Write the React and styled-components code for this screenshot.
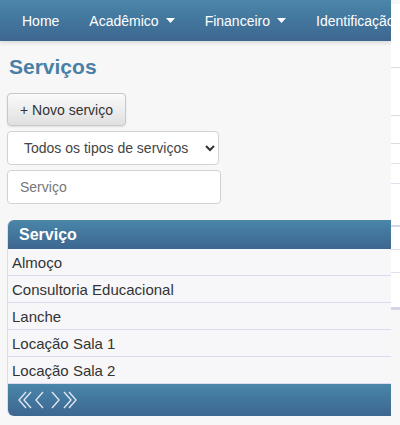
import React from 'react'
import styled, { createGlobalStyle } from 'styled-components'

const GlobalStyle = createGlobalStyle`
  html, body {
    margin: 0;
    padding: 0;
    background: #f7f7f7;
    font-family: "Liberation Sans", Arial, sans-serif;
    overflow: hidden;
  }
`;

const services = ['Almoço', 'Consultoria Educacional', 'Lanche', 'Locação Sala 1', 'Locação Sala 2'];

const sideLines = [
    { h: 64, c: '#dcdcdc' },
    { h: 48, c: '#dcdcdc' },
    { h: 28, c: '#dcdcdc' },
    { h: 20, c: '#e2e2e2' },
    { h: 20, c: '#e0e0ee' },
    { h: 43, c: '#d6d6ea', w: 2 },
    { h: 23, c: '#e0e0ee' },
    { h: 23, c: '#e0e0ee' },
    { h: 37, c: '#d4d4e4', w: 3 },
];

function Caret() {
    return (
        <svg width="9" height="5" viewBox="0 0 9 5">
            <path d="M0 0 L9 0 L4.5 5 Z" fill="#fff" />
        </svg>
    )
}

function Pager() {
    return (
        <svg width="62" height="20" viewBox="0 0 62 20" fill="none" stroke="#dbe6f0" strokeWidth="1.4">
            <path d="M9 2 L2 10 L9 18" />
            <path d="M14 2 L7 10 L14 18" />
            <path d="M26 2 L19 10 L26 18" />
            <path d="M35 2 L42 10 L35 18" />
            <path d="M47 2 L54 10 L47 18" />
            <path d="M52 2 L59 10 L52 18" />
        </svg>
    )
}

export default function App() {
    return (
        <Page>
            <GlobalStyle />
            <Main>
                <NavBar>
                    <NavItem>Home</NavItem>
                    <NavItem>Acadêmico <Caret /></NavItem>
                    <NavItem>Financeiro <Caret /></NavItem>
                    <NavItem>Identificação</NavItem>
                </NavBar>
                <Content>
                    <Title>Serviços</Title>
                    <Button>+ Novo serviço</Button>
                    <Select>
                        <span>Todos os tipos de serviços</span>
                        <svg width="10" height="7" viewBox="0 0 10 7">
                            <path d="M1 1 L5 5 L9 1" fill="none" stroke="#333" strokeWidth="2" />
                        </svg>
                    </Select>
                    <Input placeholder="Serviço" />
                    <Table>
                        <TableHead>Serviço</TableHead>
                        {services.map((s) => (
                            <Row key={s}>{s}</Row>
                        ))}
                        <TableFoot>
                            <Pager />
                        </TableFoot>
                    </Table>
                </Content>
            </Main>
            <Side>
                {sideLines.map((l, i) => (
                    <SideLine key={i} $h={l.h} $c={l.c} $w={l.w || 1} />
                ))}
            </Side>
        </Page>
    )
}

const Page = styled.div`
    display: flex;
    width: 400px;
    height: 425px;
`;

const Main = styled.div`
    width: 391px;
    flex-shrink: 0;
`;

const NavBar = styled.nav`
    height: 41px;
    display: flex;
    align-items: center;
    padding-left: 22px;
    gap: 30px;
    background: linear-gradient(to bottom, #4a86aa, #3c6690);
    box-shadow: 0 2px 4px rgba(0, 0, 0, 0.12);
    overflow: hidden;
    white-space: nowrap;
`;

const NavItem = styled.span`
    color: #fff;
    font-size: 14px;
    display: flex;
    align-items: center;
    gap: 7px;
`;

const Content = styled.div`
    padding: 14px 0 0 7px;
    display: flex;
    flex-direction: column;
    align-items: flex-start;
`;

const Title = styled.h1`
    margin: 0 0 14px 2px;
    font-size: 21px;
    font-weight: bold;
    color: #4a80a5;
    line-height: 24px;
`;

const Button = styled.button`
    width: 119px;
    height: 33px;
    border: 1px solid #c8c8c8;
    border-radius: 4px;
    background: linear-gradient(to bottom, #fafafa, #e0e0e0);
    box-shadow: 0 1px 2px rgba(0, 0, 0, 0.1);
    font-family: inherit;
    font-size: 14px;
    color: #333;
    padding: 0;
    margin-bottom: 5px;
`;

const Select = styled.div`
    box-sizing: border-box;
    width: 212px;
    height: 34px;
    border: 1px solid #d2d2d2;
    border-radius: 4px;
    background: #fff;
    display: flex;
    align-items: center;
    justify-content: space-between;
    padding: 0 3px 0 16px;
    font-size: 14px;
    color: #444;
    margin-bottom: 5px;
`;

const Input = styled.input`
    box-sizing: border-box;
    width: 214px;
    height: 34px;
    border: 1px solid #d2d2d2;
    border-radius: 4px;
    background: #fff;
    padding: 0 12px;
    font-family: inherit;
    font-size: 14px;
    margin-bottom: 16px;
    &::placeholder {
        color: #777;
    }
`;

const Table = styled.div`
    align-self: stretch;
    display: flex;
    flex-direction: column;
    border-left: 1px solid #dedcf0;
    border-radius: 6px 0 0 6px;
`;

const TableHead = styled.div`
    height: 29px;
    display: flex;
    align-items: center;
    padding-left: 11px;
    background: linear-gradient(to bottom, #4a86aa, #3c6690);
    border-radius: 6px 0 0 0;
    color: #fff;
    font-weight: bold;
    font-size: 16px;
`;

const Row = styled.div`
    height: 26px;
    display: flex;
    align-items: center;
    padding-left: 4px;
    font-size: 15px;
    color: #333;
    background: #f7f7f9;
    border-bottom: 1px solid #dcdaf0;
`;

const TableFoot = styled.div`
    height: 32px;
    display: flex;
    align-items: center;
    padding-left: 9px;
    background: linear-gradient(to bottom, #4a86aa, #3c6690);
    border-radius: 0 0 0 6px;
`;

const Side = styled.aside`
    flex: 1;
    margin-top: 4px;
    align-self: flex-start;
    background: #fff;
    display: flex;
    flex-direction: column;
`;

const SideLine = styled.div`
    height: ${(p) => p.$h - p.$w}px;
    border-bottom: ${(p) => p.$w}px solid ${(p) => p.$c};
`;
